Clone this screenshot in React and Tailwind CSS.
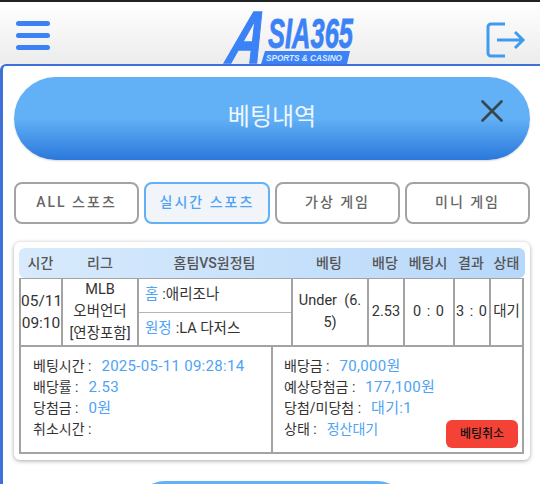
import React from 'react';
import { X } from 'lucide-react';

const FONT = "font-['Roboto','Noto_Sans_CJK_KR',sans-serif]";

const columns = [
  { label: '시간', w: 'w-[43px]' },
  { label: '리그', w: 'w-[76px]' },
  { label: '홈팀VS원정팀', w: 'w-[153px]' },
  { label: '베팅', w: 'w-[76px]' },
  { label: '배당', w: 'w-[36px]' },
  { label: '베팅시', w: 'w-[50px]' },
  { label: '결과', w: 'w-[36px]' },
  { label: '상태', w: 'w-[35px]' },
];

const tabs = [
  { label: 'ALL 스포츠' },
  { label: '실시간 스포츠', active: true },
  { label: '가상 게임' },
  { label: '미니 게임' },
];

function Logo() {
  return (
    <svg width="132" height="54" viewBox="0 0 132 54" className="ml-[46px] self-end overflow-visible">
      <text
        transform="translate(0 53) skewX(-12) scale(0.66 1)"
        fontFamily="Liberation Sans"
        fontWeight="700"
        fontStyle="italic"
        fontSize="74"
        stroke="#3b82f6"
        strokeWidth="1.5"
        fill="#3b82f6"
      >
        A
      </text>
      <text
        x="43"
        y="38"
        fontFamily="Liberation Sans"
        fontWeight="700"
        fontStyle="italic"
        fontSize="42"
        textLength="85"
        lengthAdjust="spacingAndGlyphs"
        stroke="#3b82f6"
        strokeWidth="0.8"
        fill="#3b82f6"
      >
        SIA365
      </text>
      <polygon points="40,41 125,41 122,54 36,54" fill="#3b82f6" />
      <text
        x="41"
        y="51"
        fontFamily="Liberation Sans"
        fontWeight="700"
        fontStyle="italic"
        fontSize="9.5"
        textLength="76"
        lengthAdjust="spacingAndGlyphs"
        fill="#dbeafe"
      >
        SPORTS &amp; CASINO
      </text>
    </svg>
  );
}

function LogoutIcon() {
  return (
    <svg width="40" height="38" viewBox="0 0 40 38" fill="none" stroke="#3f9bf0" strokeWidth="3" className="mt-[13px]">
      <path d="M19 3H5a3 3 0 0 0-3 3v26a3 3 0 0 0 3 3h14" />
      <path d="M11 19h26M29 11l8 8-8 8" />
    </svg>
  );
}

function Info({ label, value, valueClass = 'text-[15px] tracking-[0.3px]' }) {
  return (
    <p className="h-[21px] whitespace-nowrap leading-[21px] text-[#333]">
      {label} :<span className={`ml-[10px] text-[#4ea3f5] ${valueClass}`}>{value}</span>
    </p>
  );
}

export default function App() {
  return (
    <div className={`h-[484px] w-[540px] overflow-hidden bg-white ${FONT}`}>
      <header className="flex h-[64px] items-center justify-between border-t-2 border-[#222] bg-gradient-to-b from-white to-[#ececec] pl-4 pr-[14px]">
        <div className="mt-[4px] flex w-[34px] flex-col gap-[7px]">
          <span className="h-[5px] rounded-full bg-[#3b82f6]" />
          <span className="h-[5px] rounded-full bg-[#3b82f6]" />
          <span className="h-[5px] rounded-full bg-[#3b82f6]" />
        </div>
        <Logo />
        <LogoutIcon />
      </header>

      <main className="h-[420px] rounded-tl-md border-l-[3px] border-t-2 border-[#3f6fd8] bg-white pl-[11px] pr-[10px] pt-[11px]">
        <div className="relative flex h-[83px] items-center justify-center rounded-[42px] bg-gradient-to-b from-[#62b0f5] from-50% to-[#2b78dc] shadow-[0_1px_2px_rgba(0,0,0,0.15)]">
          <h1 className="-mt-1 text-2xl leading-none text-[#eef6ff]">베팅내역</h1>
          <X className="absolute right-[19px] top-[15px] h-[38px] w-[38px] text-[#37474f]" strokeWidth={1.7} />
        </div>

        <nav className="mt-[22px] flex justify-between">
          {tabs.map((tab) => (
            <button
              key={tab.label}
              className={
                tab.active
                  ? 'h-[42px] w-[126px] rounded-lg border-2 border-[#62b0f5] bg-[#f1f5fa] pb-[2px] text-sm font-medium tracking-[2px] text-[#4ea3f5]'
                  : 'h-[42px] w-[125px] rounded-lg border-2 border-[#a3a3a3] bg-white pb-[2px] text-sm font-medium tracking-[2px] text-[#666]'
              }
            >
              {tab.label}
            </button>
          ))}
        </nav>

        <section className="mt-[18px] h-[218px] rounded-md bg-white px-[5px] pt-[6px] shadow-[0_1px_4px_rgba(0,0,0,0.35)]">
          <div className="flex h-[30px] w-[506px] items-center rounded-md bg-gradient-to-r from-[#d8eafc] to-[#b7d8fa] text-sm font-medium text-[#555]">
            {columns.map((col) => (
              <span key={col.label} className={`${col.w} shrink-0 text-center`}>
                {col.label}
              </span>
            ))}
          </div>

          <div className="w-[505px] border-2 border-t border-[#a3a3a3] text-sm text-[#333]">
            <div className="flex h-[68px] border-b-2 border-[#a3a3a3] text-center text-[14.5px]">
              <div className="flex w-[40px] shrink-0 flex-col justify-center whitespace-nowrap text-[15.5px] leading-[22px]">
                <span>05/11</span>
                <span>09:10</span>
              </div>
              <div className="flex w-[76px] shrink-0 flex-col justify-center whitespace-nowrap border-l-2 border-[#a3a3a3] leading-[22px]">
                <span>MLB</span>
                <span>오버언더</span>
                <span>[연장포함]</span>
              </div>
              <div className="flex w-[154px] shrink-0 flex-col border-l-2 border-[#a3a3a3] text-left">
                <p className="flex h-[34px] items-center border-b border-[#b5b5b5] pl-[6px]">
                  <span className="text-[#4ea3f5]">홈</span>
                  <span className="ml-1">:애리조나</span>
                </p>
                <p className="flex flex-1 items-center pl-[6px]">
                  <span className="text-[#4ea3f5]">원정</span>
                  <span className="ml-1">:LA 다저스</span>
                </p>
              </div>
              <div className="flex w-[76px] shrink-0 items-center justify-center border-l-2 border-[#a3a3a3] leading-[22px]">
                <span>
                  Under&nbsp;&nbsp;(6.
                  <br />
                  5)
                </span>
              </div>
              <div className="flex w-[36px] shrink-0 items-center justify-center border-l-2 border-[#a3a3a3]">2.53</div>
              <div className="flex w-[50px] shrink-0 items-center justify-center border-l-2 border-[#a3a3a3] tracking-[1px]">0 : 0</div>
              <div className="flex w-[36px] shrink-0 items-center justify-center whitespace-nowrap border-l-2 border-[#a3a3a3] tracking-[1px]">3 : 0</div>
              <div className="flex flex-1 items-center justify-center border-l-2 border-[#a3a3a3]">대기</div>
            </div>

            <div className="flex h-[105px]">
              <div className="w-[250px] shrink-0 pl-3 pt-[9px]">
                <Info label="베팅시간" value="2025-05-11 09:28:14" />
                <Info label="배당률" value="2.53" />
                <Info label="당첨금" value="0원" />
                <Info label="취소시간" value="" />
              </div>
              <div className="relative flex-1 border-l-2 border-[#a3a3a3] pl-[11px] pt-[9px]">
                <Info label="배당금" value="70,000원" />
                <Info label="예상당첨금" value="177,100원" />
                <Info label="당첨/미당첨" value="대기:1" />
                <Info label="상태" value="정산대기" valueClass="text-sm" />
                <button className="absolute bottom-[4px] right-[4px] h-[28px] w-[72px] rounded-md bg-[#f44336] text-xs font-medium text-[#111]">
                  베팅취소
                </button>
              </div>
            </div>
          </div>
        </section>

        <div className="mx-auto mt-[21px] h-[30px] w-[272px] -translate-x-[1px] rounded-t-full bg-[#62b0f5]" />
      </main>
    </div>
  );
}
